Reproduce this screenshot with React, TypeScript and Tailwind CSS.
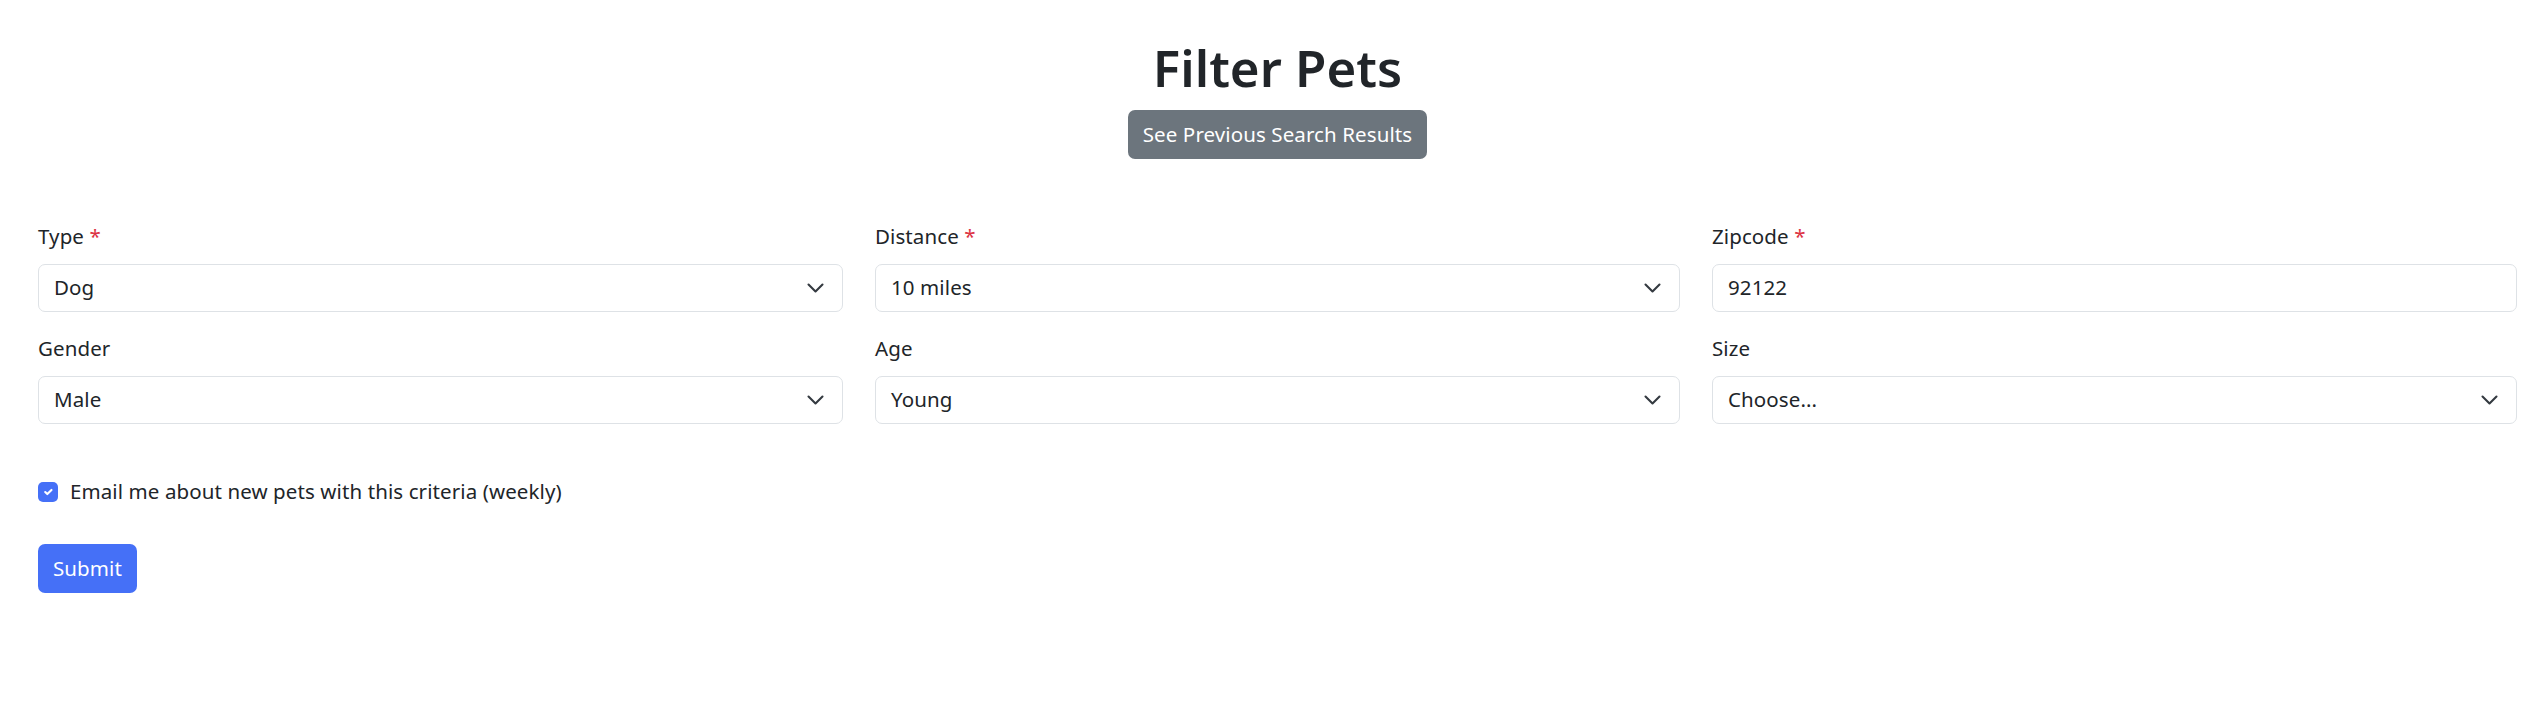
import React from "react";

const Chevron = () => (
  <svg width="19" height="14" viewBox="0 0 16 12" fill="none" className="shrink-0">
    <path d="m2 3 6 6 6-6" stroke="#343a40" strokeWidth="1.8" strokeLinecap="round" strokeLinejoin="round" />
  </svg>
);

function Field({ label, required, value, select = true }: { label: string; required?: boolean; value: string; select?: boolean }) {
  return (
    <div className="flex flex-col">
      <div className="leading-[24px] mb-[16px] text-[20.5px] tracking-[0.1px] text-[#212529]">
        {label}
        {required && <span className="text-[#dc3545]"> *</span>}
      </div>
      <div className="h-[48px] border border-[#dee2e6] rounded-[7px] bg-white flex items-center justify-between pl-[15px] pr-[17px]">
        <span className="text-[20.5px] tracking-[0.1px] text-[#212529] leading-[30px] pb-[2px]">{value}</span>
        {select && <Chevron />}
      </div>
    </div>
  );
}

export default function App() {
  return (
    <div
      className="bg-white min-h-[708px] pt-[37px] pl-[38px] pr-[27px] text-[#212529]"
      style={{ fontFamily: '"Noto Sans", "Open Sans", sans-serif' }}
    >
      <h1 className="text-center text-[51px] leading-[60px] font-semibold mb-[13px]">Filter Pets</h1>
      <div className="flex justify-center">
        <button className="h-[49px] px-[15px] pb-[2px] rounded-[7px] bg-[#6c757d] text-white text-[20.5px] tracking-[0.1px] leading-[30px]">
          See Previous Search Results
        </button>
      </div>
      <div className="grid grid-cols-3 gap-x-[32px] gap-y-[24px] mt-[65px]">
        <Field label="Type" required value="Dog" />
        <Field label="Distance" required value="10 miles" />
        <Field label="Zipcode" required value="92122" select={false} />
        <Field label="Gender" value="Male" />
        <Field label="Age" value="Young" />
        <Field label="Size" value="Choose..." />
      </div>
      <div className="mt-[53px] flex items-center h-[30px]">
        <div className="w-[20px] h-[20px] rounded-[5px] bg-[#4570f7] flex items-center justify-center">
          <svg width="14" height="14" viewBox="0 0 20 20" fill="none">
            <path d="m6 10 3 3 6-6" stroke="#fff" strokeWidth="3" strokeLinecap="round" strokeLinejoin="round" />
          </svg>
        </div>
        <span className="ml-[12px] text-[20.5px] tracking-[0.1px] leading-[30px] pb-[2px]">Email me about new pets with this criteria (weekly)</span>
      </div>
      <button className="mt-[37px] h-[49px] px-[15px] pb-[2px] rounded-[7px] bg-[#4570f7] text-white text-[20.5px] tracking-[0.1px] leading-[30px]">
        Submit
      </button>
    </div>
  );
}
